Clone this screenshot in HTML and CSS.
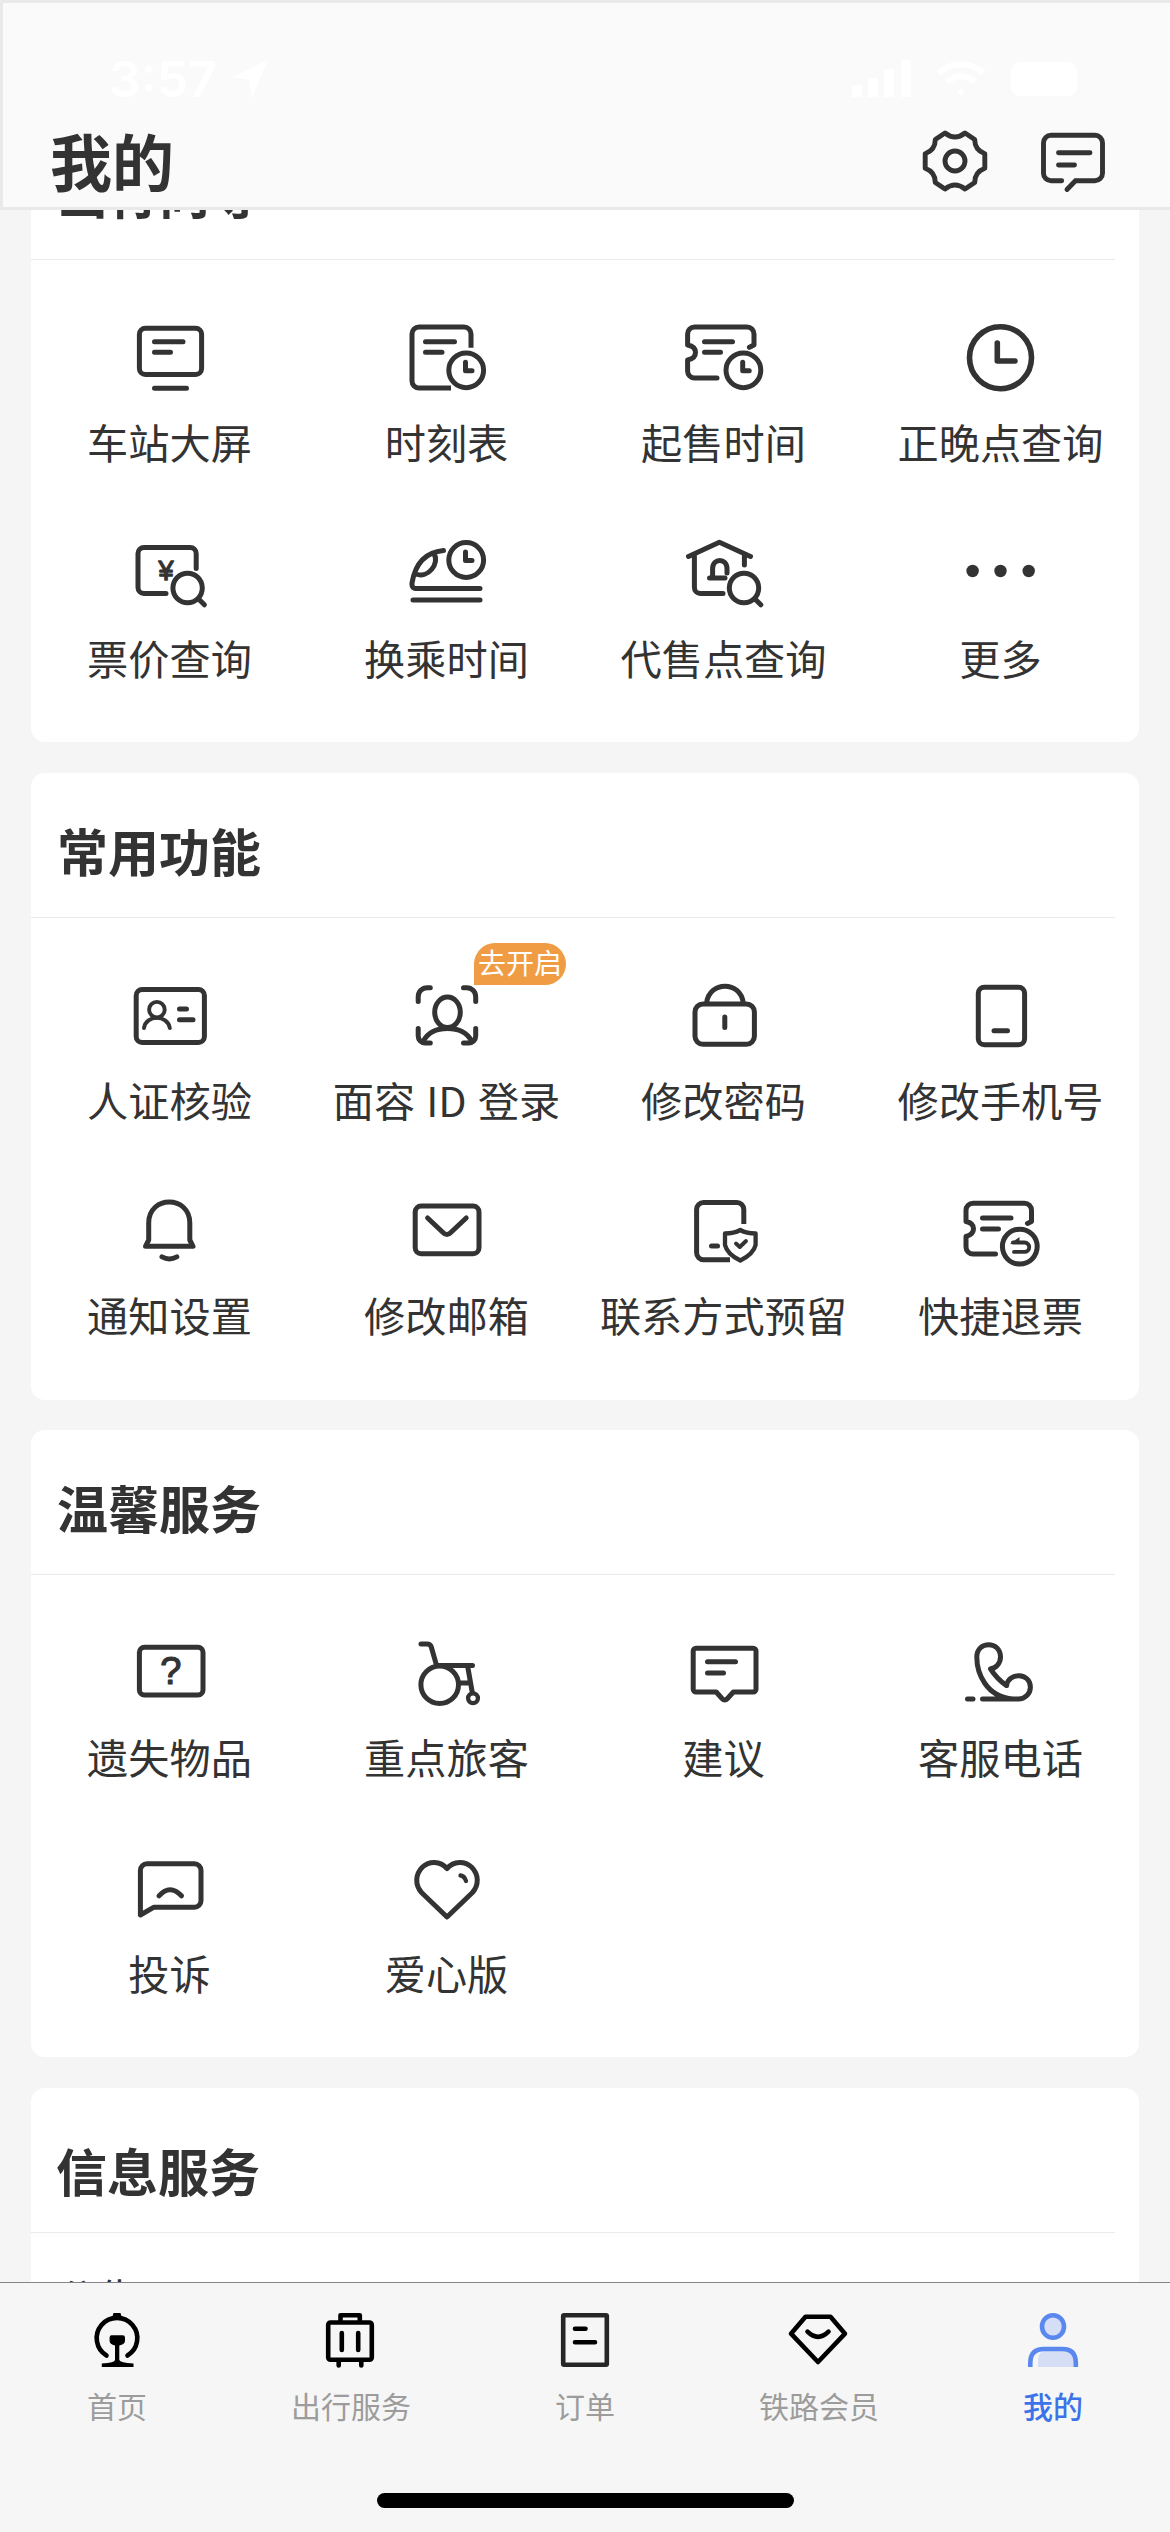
FILE: index.html
```html
<!DOCTYPE html>
<html lang="zh-CN">
<head>
<meta charset="utf-8">
<title>我的</title>
<link rel="stylesheet" href="styles.css">
</head>
<body>
<svg width="0" height="0" class="defs">
  <symbol id="mini-clock" viewBox="0 0 44 44">
    <circle cx="22" cy="22" r="17.4"/><path d="M21.3 14v8.5h6.5"/>
  </symbol>
  <symbol id="lens" viewBox="0 0 44 44">
    <circle cx="20" cy="20" r="14.7"/><path d="M31 31l5.8 5.8"/>
  </symbol>
</svg>
<div class="phone">
  <header class="header">
    <div class="status">
      <div class="status-left"><span class="time">3:57</span>
        <svg class="loc" viewBox="0 0 40 40"><path d="M38 1 2 18l17 3 3 18z"/></svg>
      </div>
      <div class="status-right">
        <svg class="signal" viewBox="0 0 60 40"><path d="M0 26h10v12H0zM16 19h10v19H16zM32 10h10v28H32zM49 1h10v37H49z"/></svg>
        <svg class="wifi" viewBox="0 0 50 40"><path d="M3 14a32 32 0 0 1 44 0M11 23a20 20 0 0 1 28 0"/><circle cx="25" cy="33" r="3"/></svg>
        <svg class="battery" viewBox="0 0 76 40"><rect x="1" y="3" width="66" height="34" rx="9"/></svg>
      </div>
    </div>
    <div class="titlebar">
      <h1>我的</h1>
      <div class="tools">
        <svg class="tool" viewBox="0 0 72 72"><path d="M6.2 28.7Q16.3 25 16.3 14.5L26 8Q36 16 46 8L55.700 14.500Q55.700 25 65.800 28.700V43.300Q55.700 47 55.700 57.500L46 64Q36 56 26 64L16.300 57.500Q16.300 47 6.200 43.300Z" stroke-linejoin="round"/><circle cx="36" cy="36" r="10"/></svg>
        <svg class="tool" viewBox="0 0 72 72"><path d="M24.700 55.800H14a7.500 7.500 0 0 1-7.500-7.500V17.700a7.500 7.500 0 0 1 7.500-7.500H58a7.500 7.500 0 0 1 7.500 7.500V48.300a7.500 7.500 0 0 1-7.500 7.500H38.500L30 64.500M21.500 27.800H53M21.500 40H37.500"/></svg>
      </div>
    </div>
  </header>

  <main class="content">
    <div class="cards">
      <section class="card">
        <h2>出行向导</h2>
        <div class="grid">
          <div class="item"><svg viewBox="0 0 120 100"><rect x="29.400" y="18.200" width="62.200" height="46.300" rx="6"/><path d="M44.500 31.700H73M44.500 42.300H60.500M44.500 78.300H76.500"/></svg><span>车站大屏</span></div>
          <div class="item"><svg viewBox="0 0 120 100"><path d="M84 37.700V24a7 7 0 0 0-7-7H32a7 7 0 0 0-7 7V71a7 7 0 0 0 7 7H64" stroke-linecap="butt"/><path d="M38.500 31.700H67.500M38.500 42.300H55"/><use href="#mini-clock" x="57.200" y="38.300" width="44" height="44"/></svg><span>时刻表</span></div>
          <div class="item"><svg viewBox="0 0 120 100"><path d="M85.400 37.300 90 35V24a7 7 0 0 0-7-7H30.600a7 7 0 0 0-7 7V35Q31.500 36.500 31.500 42.500T23.600 50V61a7 7 0 0 0 7 7H53M40.500 31.700H68.500M40.500 42.300H56.500"/><use href="#mini-clock" x="57.400" y="38.300" width="44" height="44"/></svg><span>起售时间</span></div>
          <div class="item"><svg viewBox="0 0 120 100" class="bold"><circle cx="59.500" cy="47.700" r="31"/><path d="M56.300 33V51H74"/></svg><span>正晚点查询</span></div>
          <div class="item"><svg viewBox="0 0 120 100"><path d="M86.200 42.500V27.500a6 6 0 0 0-6-6H34a6 6 0 0 0-6 6V61.500a6 6 0 0 0 6 6H56"/><text x="56" y="53.500" class="yen">¥</text><use href="#lens" x="57.600" y="42" width="44" height="44"/></svg><span>票价查询</span></div>
          <div class="item"><svg viewBox="0 0 120 100"><path d="M56.500 24.500Q30 27 25 57V59a3.400 3.400 0 0 0 3.400 3.400H93M26 74H93M47 28C53 37 41 53 29 48"/><use href="#mini-clock" x="57.200" y="12" width="44" height="44"/></svg><span>换乘时间</span></div>
          <div class="item"><svg viewBox="0 0 120 100"><path d="M24.500 30.500 55.400 16.300 86.500 30.500M30.400 30V61.500a6 6 0 0 0 6 6H59M80.400 30V39M45.500 52H61M48.600 52V43C48.600 31.500 63 31.500 63 43V47"/><use href="#lens" x="60" y="42" width="44" height="44"/></svg><span>代售点查询</span></div>
          <div class="item"><svg viewBox="0 0 120 100" class="solid"><circle cx="31.600" cy="45" r="6.200"/><circle cx="59.500" cy="45" r="6.200"/><circle cx="87.700" cy="45" r="6.200"/></svg><span>更多</span></div>
        </div>
      </section>

      <section class="card">
        <h2>常用功能</h2>
        <div class="grid">
          <div class="item"><svg viewBox="0 0 120 100"><rect x="26.200" y="21.600" width="68.200" height="52.800" rx="6"/><g class="thin"><circle cx="46.900" cy="41.700" r="7.800"/><path d="M34 60C36 46.500 57.500 46.500 59.800 60"/></g><path d="M69.500 41H76.500M69.500 51.700H83"/></svg><span>人证核验</span></div>
          <div class="item"><svg viewBox="0 0 120 100"><path d="M31.200 33.500V28.700a9 9 0 0 1 9-9H43.300M76.500 19.700H79.700a9 9 0 0 1 9 9V33.500M31.200 60.500V68a7 7 0 0 0 7 7H43.300M76.500 75H81.700a7 7 0 0 0 7-7V60.500"/><ellipse cx="60.500" cy="44.300" rx="12.800" ry="15.300"/><path d="M36.500 73Q43 60.500 60.500 60.500T84.500 73"/></svg><span>面容 ID 登录</span><b class="badge">去开启</b></div>
          <div class="item"><svg viewBox="0 0 120 100"><rect x="31" y="36" width="59.400" height="40.300" rx="8"/><path d="M42.600 35C45 12.500 77 12.500 79.200 35M60.800 49V59.500"/></svg><span>修改密码</span></div>
          <div class="item"><svg viewBox="0 0 120 100"><rect x="37.300" y="19.200" width="46.300" height="57.600" rx="6"/><path d="M53 62.700H66.500"/></svg><span>修改手机号</span></div>
          <div class="item"><svg viewBox="0 0 120 100"><path d="M38.700 57V40C38.700 12 79.800 12 79.800 40V57L83 63.300H35.500ZM52 73.800Q59.400 78 66.800 73.800"/></svg><span>通知设置</span></div>
          <div class="item"><svg viewBox="0 0 120 100"><rect x="28.200" y="23" width="63.800" height="47.800" rx="6"/><path d="M40.600 35 56 49.500Q59.900 53.500 63.800 49.500L79.200 35"/></svg><span>修改邮箱</span></div>
          <div class="item"><svg viewBox="0 0 120 100"><path d="M79.800 41V26.500a7 7 0 0 0-7-7H39.600a7 7 0 0 0-7 7V69.800a7 7 0 0 0 7 7H66" stroke-linecap="butt"/><path d="M47.500 63H53.500"/><path d="M76.300 47Q70 50.500 61 50.500V62Q63 71 76.300 77.500 89.500 71 91.600 62V50.500Q82.600 50.500 76.300 47Z" class="mid"/><path d="M72 60.500 75.800 64 82 58" class="thin"/></svg><span>联系方式预留</span></div>
          <div class="item"><svg viewBox="0 0 120 100"><path d="M86.500 40.500 90.500 38.500V27.200a7 7 0 0 0-7-7H32a7 7 0 0 0-7 7V38.500Q32.500 40 32.500 45.700T25 53.500V64a7 7 0 0 0 7 7H54.500M41.500 35H70M41.500 46H57.500"/><circle cx="78.800" cy="63.600" r="17.400"/><path d="M72 59.500H83.500a4.700 4.700 0 0 1 0 9.400H73" class="thin"/><path d="M69 61 78.500 54V61Z" class="fill"/></svg><span>快捷退票</span></div>
        </div>
      </section>

      <section class="card">
        <h2>温馨服务</h2>
        <div class="grid">
          <div class="item"><svg viewBox="0 0 120 100"><rect x="29.400" y="22.200" width="63.600" height="47.800" rx="5"/><text x="60.700" y="58.500" class="ask">?</text></svg><span>遗失物品</span></div>
          <div class="item"><svg viewBox="0 0 120 100"><path d="M34 19H40Q43.500 19 44.300 22L49.600 40.600H85.500M80.600 41 85.200 67M73 58H83"/><circle cx="52.700" cy="59.800" r="18.800"/><circle cx="86" cy="73.300" r="4.900" class="mid"/></svg><span>重点旅客</span></div>
          <div class="item"><svg viewBox="0 0 120 100"><path d="M32 23.200H89.200a2.800 2.800 0 0 1 2.800 2.800V64.200a2.800 2.800 0 0 1-2.800 2.800H69.400L63.500 73.500Q60.800 76.500 58 73.500L52.200 67H32a2.800 2.800 0 0 1-2.800-2.800V26a2.800 2.800 0 0 1 2.800-2.800ZM43.500 36.700H71.500M43.500 48H59.500"/></svg><span>建议</span></div>
          <div class="item"><svg viewBox="0 0 120 100"><path d="M41.500 74H77.400A12 12 0 0 0 89.400 62C89.400 47.500 67.500 47 65.600 60.600Q56 54 49.500 43.800C54 43.500 59.500 39 59.500 32 59.500 15.500 35.800 15.500 35.800 32 35.800 48 45 72 72 74M26.500 74H32"/></svg><span>客服电话</span></div>
          <div class="item"><svg viewBox="0 0 120 100"><path d="M37 22.800H84.500a6.500 6.500 0 0 1 6.500 6.500V59.700a6.500 6.500 0 0 1-6.500 6.500H44L30.400 74V29.300a6.500 6.500 0 0 1 6.600-6.500ZM49 54.800Q60 42.500 71.500 54.800"/></svg><span>投诉</span></div>
          <div class="item"><svg viewBox="0 0 120 100"><path d="M60 27.500C53 19.500 42 20 35.500 26 28 33.500 28 44 34.500 51.500L60 76 85.500 51.500C92 44 92 33.500 84.500 26 78 20 67 19.500 60 27.500Z"/><path d="M73.500 34.500Q77.500 35 79 40" class="mid"/></svg><span>爱心版</span></div>
        </div>
      </section>

      <section class="card">
        <h2 class="low">信息服务</h2>
        <p class="notice">公告</p>
      </section>
    </div>
  </main>

  <nav class="tabbar">
    <div class="tabs">
      <div class="tab"><svg viewBox="0 0 80 80"><path d="M29.500 55.500A20.300 20.300 0 1 1 50.500 55.500" class="line"/><path d="M36.500 13H43.500L45.500 20H34.500ZM34.500 35.300H45.700Q48 35.300 48 37.500V41Q48 44 42.300 45.500V60Q43 62.500 56.500 63.500V67H24.800V63.500Q38 62.500 38 60V45.500Q32.600 44 32.600 41V37.500Q32.600 35.300 34.500 35.300Z"/></svg><span>首页</span></div>
      <div class="tab"><svg viewBox="0 0 80 80"><path class="line" d="M19.500 22.500H58.500a2.300 2.300 0 0 1 2.300 2.300V57.500a2.300 2.300 0 0 1-2.300 2.300H19.500a2.300 2.300 0 0 1-2.300-2.300V24.800a2.300 2.300 0 0 1 2.300-2.300ZM29.500 22V15.300H48.800V22M30.800 33V50M47.200 33V50M27.700 61V65.500M50.300 61V65.500"/></svg><span>出行服务</span></div>
      <div class="tab"><svg viewBox="0 0 80 80"><rect class="line soft" x="18.200" y="15.200" width="43.600" height="49.600" rx="1"/><path class="line" d="M30 28.700H40.500M30 42.300H50"/></svg><span>订单</span></div>
      <div class="tab"><svg viewBox="0 0 80 80"><path class="line" d="M26.500 16.700H51.500L66 33.700 39 62 12 33.700ZM28.500 31.700Q39 42 49.500 31.700"/></svg><span>铁路会员</span></div>
      <div class="tab active"><svg viewBox="0 0 80 80"><path class="tint" d="M25 67V60Q25 51 34 50H50Q62 50 62 62V67Z"/><ellipse class="line tinted" cx="40" cy="26.500" rx="11" ry="11.300"/><path class="line flat" d="M17.300 67V63Q17.300 49 31 49H49.500Q62.800 49 62.800 63V67"/></svg><span>我的</span></div>
    </div>
    <div class="home-indicator"></div>
  </nav>
</div>
</body>
</html>
```
FILE: styles.css
```css
* { box-sizing: border-box; margin: 0; padding: 0; }
body {
  width: 1170px;
  height: 2532px;
  overflow: hidden;
  background: #f5f5f5;
  color: #333;
  font-family: "Noto Sans CJK SC", "Noto Sans", sans-serif;
}
.defs { display: none; }
.phone { display: flex; flex-direction: column; height: 2532px; }

.header {
  flex: none;
  height: 210px;
  background: #fafafa;
  border: 3px solid #e9e9e9;
  border-right: 0;
}
.status {
  display: flex;
  justify-content: space-between;
  align-items: center;
  height: 112px;
  padding: 40px 84px 0 106px;
  fill: #fff;
}
.status-left, .status-right { display: flex; align-items: center; }
.status-left { gap: 13px; }
.status-right { gap: 24px; }
.time { font: 600 50px/1 Inter, sans-serif; color: #fff; }
.loc { width: 40px; height: 40px; }
.signal { width: 60px; height: 40px; }
.wifi { width: 50px; height: 40px; }
.wifi path { fill: none; stroke: #fff; stroke-width: 6; }
.battery { width: 76px; height: 40px; }
.titlebar {
  display: flex;
  justify-content: space-between;
  align-items: center;
  height: 92px;
  padding: 0 61px 0 47px;
}
h1 { margin-top: -3px; font-size: 62px; line-height: 90px; font-weight: 700; }
.tools { display: flex; gap: 46px; }
.tool {
  width: 72px;
  height: 72px;
  fill: none;
  stroke: #333;
  stroke-width: 4.900;
  stroke-linecap: round;
}

.content { flex: 1; min-height: 0; overflow: hidden; }
.cards {
  display: flex;
  flex-direction: column;
  gap: 30.670px;
  margin: -95px 31px 0;
}
.card {
  flex: none;
  height: 627px;
  background: #fff;
  border-radius: 14px;
}
h2 {
  height: 145px;
  margin-right: 24px;
  padding: 40px 0 0 26px;
  border-bottom: 1px solid #ebebeb;
  font-size: 51px;
  line-height: 74px;
  font-weight: 700;
}
h2.low { padding: 45px 0 0 25px; }
.notice { padding: 33px 26px 0; font-size: 41px; line-height: 60px; }
.grid {
  display: grid;
  grid-template-columns: repeat(4, 277px);
  grid-auto-rows: 164px;
  row-gap: 51.700px;
  padding-top: 50px;
}
.item {
  position: relative;
  display: flex;
  flex-direction: column;
  align-items: center;
  gap: 1px;
}
.item span { font-size: 41.200px; line-height: 60px; white-space: nowrap; word-spacing: 2px; }
.item svg {
  width: 120px;
  height: 100px;
  fill: none;
  stroke: #333;
  stroke-width: 5;
  stroke-linecap: round;
  stroke-linejoin: round;
}
.item svg.bold { stroke-width: 5.600; }
.item svg.solid { fill: #333; stroke: none; }
.item .thin { stroke-width: 3.900; }
.item .mid { stroke-width: 4.300; }
.item .fill { fill: #333; stroke: none; }
.item text { fill: #333; stroke: #333; font-family: "Liberation Sans", sans-serif; text-anchor: middle; }
.item .yen { font-size: 27px; stroke-width: 1.400; }
.item .ask { font-size: 38px; stroke-width: 1.200; }
.badge {
  position: absolute;
  left: 166px;
  top: -25px;
  width: 92px;
  height: 42px;
  border-radius: 21px 21px 21px 0;
  background: #f09c45;
  color: #fff;
  font-size: 28px;
  font-weight: 400;
  line-height: 39px;
  text-align: center;
}

.tabbar {
  flex: none;
  height: 250px;
  background: #f6f6f6;
  border-top: 1px solid #858585;
}
.tabs { display: grid; grid-template-columns: repeat(5, 234px); height: 210px; padding-top: 17px; }
.tab { display: flex; flex-direction: column; align-items: center; gap: 3px; }
.tab svg { width: 80px; height: 80px; fill: #000; }
.tab .line { fill: none; stroke: #000; stroke-width: 4.600; stroke-linecap: round; stroke-linejoin: round; }
.tab .soft { stroke: #262626; }
.tab span { color: #9c9c9c; font-size: 30px; line-height: 44px; }
.tab.active .line { stroke: #5a88ee; }
.tab.active .tinted { fill: #d5def5; }
.tab.active .flat { stroke-linecap: butt; }
.tab .tint { fill: #d5def5; }
.tab.active span { color: #3c73e8; font-weight: 500; }
.home-indicator { width: 417px; height: 15px; margin: 0 auto; border-radius: 8px; background: #000; }
```
